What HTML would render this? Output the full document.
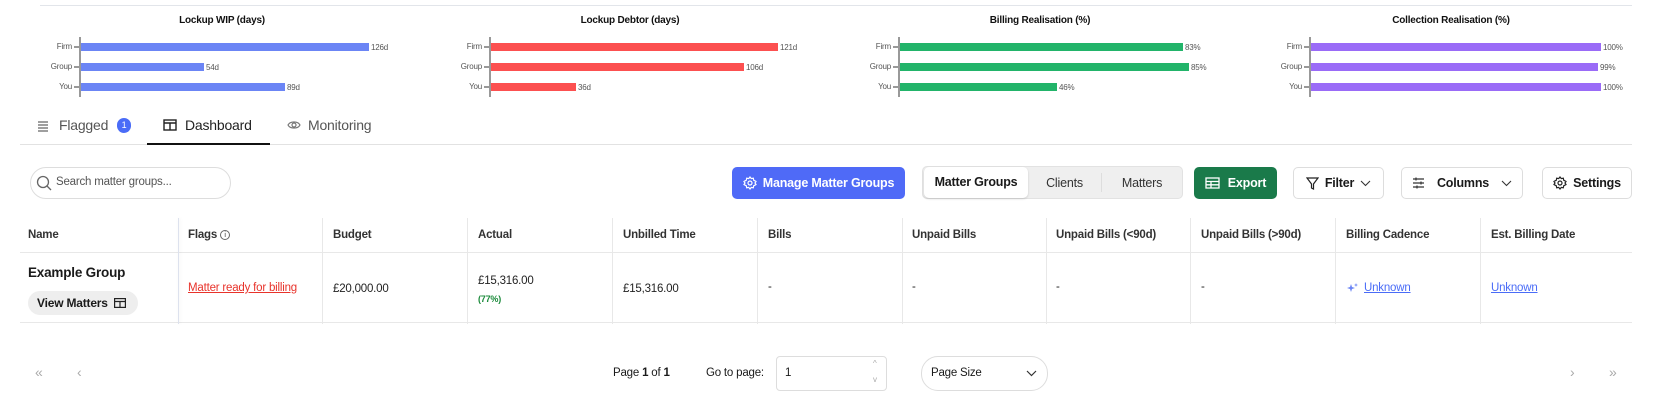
<!DOCTYPE html>
<html><head><meta charset="utf-8">
<style>
*{box-sizing:border-box;margin:0;padding:0}
body{width:1667px;height:407px;background:#fff;font-family:"Liberation Sans",Arial,sans-serif;color:#1a1a1a;position:relative;overflow:hidden;letter-spacing:-0.2px}
.a{position:absolute}
.topline{left:40px;top:5px;width:1592px;height:1px;background:#e2e5ea}
.ct{font-size:10px;font-weight:bold;color:#111;transform:translateX(-50%);white-space:nowrap;top:15px}
.axis{width:2px;background:#999;top:37px;height:60px}
.bar{height:8px}
.bl{font-size:8px;color:#555}
.cl{font-size:8px;color:#555;text-align:right;width:40px}
.tick{width:5px;height:2px;background:#999}
.tab{font-size:14px;color:#555;top:117px}
.btn{border:1px solid #ddd;border-radius:5px;background:#fff;height:32px;top:167px;display:flex;align-items:center;justify-content:center;font-size:12.5px;font-weight:bold;gap:8px;white-space:nowrap}
.th{font-size:11.5px;font-weight:bold;color:#333;top:229px}
.vl{width:1px;background:#e8e8e8;top:218px;height:106px}
.td{font-size:11.5px;color:#222}
</style></head><body>
<div class="a topline"></div>

<div class="a ct" style="left:222px">Lockup WIP (days)</div>
<div class="a axis" style="left:79px"></div>
<div class="a bar" style="left:81px;top:43px;width:288px;background:#6b85f5"></div>
<div class="a bar" style="left:81px;top:63px;width:123px;background:#6b85f5"></div>
<div class="a bar" style="left:81px;top:83px;width:204px;background:#6b85f5"></div>
<div class="a bl" style="left:371px;top:43px">126d</div>
<div class="a bl" style="left:206px;top:63px">54d</div>
<div class="a bl" style="left:287px;top:83px">89d</div>
<div class="a cl" style="left:32px;top:42px">Firm</div><div class="a tick" style="left:74px;top:46px"></div>
<div class="a cl" style="left:32px;top:62px">Group</div><div class="a tick" style="left:74px;top:66px"></div>
<div class="a cl" style="left:32px;top:82px">You</div><div class="a tick" style="left:74px;top:86px"></div>

<div class="a ct" style="left:630px">Lockup Debtor (days)</div>
<div class="a axis" style="left:489px"></div>
<div class="a bar" style="left:491px;top:43px;width:287px;background:#fc5050"></div>
<div class="a bar" style="left:491px;top:63px;width:253px;background:#fc5050"></div>
<div class="a bar" style="left:491px;top:83px;width:85px;background:#fc5050"></div>
<div class="a bl" style="left:780px;top:43px">121d</div>
<div class="a bl" style="left:746px;top:63px">106d</div>
<div class="a bl" style="left:578px;top:83px">36d</div>
<div class="a cl" style="left:442px;top:42px">Firm</div><div class="a tick" style="left:484px;top:46px"></div>
<div class="a cl" style="left:442px;top:62px">Group</div><div class="a tick" style="left:484px;top:66px"></div>
<div class="a cl" style="left:442px;top:82px">You</div><div class="a tick" style="left:484px;top:86px"></div>

<div class="a ct" style="left:1040px">Billing Realisation (%)</div>
<div class="a axis" style="left:898px"></div>
<div class="a bar" style="left:900px;top:43px;width:283px;background:#22b46a"></div>
<div class="a bar" style="left:900px;top:63px;width:289px;background:#22b46a"></div>
<div class="a bar" style="left:900px;top:83px;width:157px;background:#22b46a"></div>
<div class="a bl" style="left:1185px;top:43px">83%</div>
<div class="a bl" style="left:1191px;top:63px">85%</div>
<div class="a bl" style="left:1059px;top:83px">46%</div>
<div class="a cl" style="left:851px;top:42px">Firm</div><div class="a tick" style="left:893px;top:46px"></div>
<div class="a cl" style="left:851px;top:62px">Group</div><div class="a tick" style="left:893px;top:66px"></div>
<div class="a cl" style="left:851px;top:82px">You</div><div class="a tick" style="left:893px;top:86px"></div>

<div class="a ct" style="left:1451px">Collection Realisation (%)</div>
<div class="a axis" style="left:1309px"></div>
<div class="a bar" style="left:1311px;top:43px;width:290px;background:#9a6bf7"></div>
<div class="a bar" style="left:1311px;top:63px;width:287px;background:#9a6bf7"></div>
<div class="a bar" style="left:1311px;top:83px;width:290px;background:#9a6bf7"></div>
<div class="a bl" style="left:1603px;top:43px">100%</div>
<div class="a bl" style="left:1600px;top:63px">99%</div>
<div class="a bl" style="left:1603px;top:83px">100%</div>
<div class="a cl" style="left:1262px;top:42px">Firm</div><div class="a tick" style="left:1304px;top:46px"></div>
<div class="a cl" style="left:1262px;top:62px">Group</div><div class="a tick" style="left:1304px;top:66px"></div>
<div class="a cl" style="left:1262px;top:82px">You</div><div class="a tick" style="left:1304px;top:86px"></div>

<div class="a" style="left:20px;top:144px;width:1612px;height:1px;background:#e2e2e2"></div>
<div class="a" style="left:147px;top:143px;width:123px;height:2px;background:#111"></div>
<svg class="a" style="left:37px;top:120px" width="12" height="12" viewBox="0 0 12 12" fill="none" stroke="#666" stroke-width="1.2"><path d="M1 2h10M1 5h10M1 8h10M1 11h10"/></svg>
<div class="a tab" style="left:59px">Flagged</div>
<div class="a" style="left:117px;top:118px;width:14px;height:15px;border-radius:8px;background:#4a6cf7;color:#fff;font-size:9px;text-align:center;line-height:15px">1</div>
<svg class="a" style="left:163px;top:119px" width="14" height="12" viewBox="0 0 14 12" fill="none" stroke="#222" stroke-width="1.4"><rect x="1" y="1" width="12" height="10"/><path d="M1 4h12M7 4v7"/></svg>
<div class="a tab" style="left:185px;color:#222">Dashboard</div>
<svg class="a" style="left:287px;top:119px" width="14" height="12" viewBox="0 0 14 12" fill="none" stroke="#777" stroke-width="1.2"><path d="M1 6c2-4 10-4 12 0c-2 4-10 4-12 0z"/><circle cx="7" cy="6" r="2"/></svg>
<div class="a tab" style="left:308px">Monitoring</div>

<div class="a" style="left:30px;top:167px;width:201px;height:32px;border:1px solid #ddd;border-radius:16px"></div>
<svg class="a" style="left:36px;top:175px" width="16" height="16" viewBox="0 0 16 16" fill="none" stroke="#666" stroke-width="1.3"><circle cx="7" cy="7" r="5.5"/><path d="M11 11l4 4"/></svg>
<div class="a" style="left:56px;top:176px;font-size:11.5px;color:#555">Search matter groups...</div>

<div class="a btn" style="left:732px;width:173px;background:#4f6af7;border-color:#4f6af7;color:#fff;font-size:12.5px;gap:6px">
<svg width="14" height="14" viewBox="0 0 14 14" fill="none" stroke="#fff" stroke-width="1.2"><circle cx="7" cy="7" r="2"/><path d="M7 1l1.3 1.6 2-.4.4 2L13 5.5 12 7l1 1.5-2.3 1.3-.4 2-2-.4L7 13l-1.3-1.6-2 .4-.4-2L1 8.5 2 7 1 5.5l2.3-1.3.4-2 2 .4z"/></svg>Manage Matter Groups</div>

<div class="a" style="left:922px;top:166px;width:261px;height:33px;background:#efefef;border:1px solid #e2e2e2;border-radius:5px"></div>
<div class="a" style="left:924px;top:167px;width:104px;height:31px;background:#fff;border-radius:5px;box-shadow:0 1px 2px rgba(0,0,0,.15);font-size:12.5px;font-weight:bold;text-align:center;line-height:31px">Matter Groups</div>
<div class="a" style="left:1028px;top:176px;width:73px;text-align:center;font-size:12.5px;color:#333">Clients</div>
<div class="a" style="left:1101px;top:173px;width:1px;height:19px;background:#ddd"></div>
<div class="a" style="left:1102px;top:176px;width:80px;text-align:center;font-size:12.5px;color:#333">Matters</div>

<div class="a btn" style="left:1194px;width:83px;background:#1a7a4a;border-color:#1a7a4a;color:#fff">
<svg width="15" height="12" viewBox="0 0 15 12" fill="none" stroke="#fff" stroke-width="1.3"><rect x="1" y="1" width="13" height="10"/><path d="M1 4.5h13M1 7.8h13M6 4.5v6.5"/></svg>Export</div>
<div class="a btn" style="left:1293px;width:91px;gap:6px">
<svg width="13" height="13" viewBox="0 0 13 13" fill="none" stroke="#222" stroke-width="1.2"><path d="M1 1h11L7.5 7v5L5.5 11V7z"/></svg>Filter<svg width="11" height="7" viewBox="0 0 11 7" fill="none" stroke="#333" stroke-width="1.1"><path d="M1 1l4.5 4.5L10 1"/></svg></div>
<div class="a btn" style="left:1401px;width:122px;gap:12px">
<svg width="13" height="12" viewBox="0 0 13 12" fill="none" stroke="#333" stroke-width="1.2"><path d="M1 2h11M1 6h11M1 10h11M4 0.5v3M9 4.5v3M5 8.5v3"/></svg>Columns<svg width="11" height="7" viewBox="0 0 11 7" fill="none" stroke="#333" stroke-width="1.1"><path d="M1 1l4.5 4.5L10 1"/></svg></div>
<div class="a btn" style="left:1542px;width:90px;gap:6px">
<svg width="14" height="14" viewBox="0 0 14 14" fill="none" stroke="#222" stroke-width="1.2"><circle cx="7" cy="7" r="2"/><path d="M7 1l1.3 1.6 2-.4.4 2L13 5.5 12 7l1 1.5-2.3 1.3-.4 2-2-.4L7 13l-1.3-1.6-2 .4-.4-2L1 8.5 2 7 1 5.5l2.3-1.3.4-2 2 .4z"/></svg>Settings</div>

<div class="a" style="left:20px;top:252px;width:1612px;height:1px;background:#e8e8e8"></div>
<div class="a" style="left:20px;top:322px;width:1612px;height:1px;background:#e8e8e8"></div>
<div class="a" style="left:178px;top:218px;width:1px;height:106px;background:#dde2ee;box-shadow:1px 0 3px rgba(0,0,0,.08)"></div>
<div class="a vl" style="left:322px"></div><div class="a vl" style="left:467px"></div><div class="a vl" style="left:612px"></div><div class="a vl" style="left:757px"></div><div class="a vl" style="left:902px"></div><div class="a vl" style="left:1046px"></div><div class="a vl" style="left:1190px"></div><div class="a vl" style="left:1335px"></div><div class="a vl" style="left:1480px"></div>
<div class="a th" style="left:28px">Name</div>
<div class="a th" style="left:188px">Flags <span style="display:inline-block;width:10px;height:10px;border:1px solid #666;border-radius:50%;font-size:7px;text-align:center;line-height:9px;font-weight:normal;vertical-align:1px">i</span></div>
<div class="a th" style="left:333px">Budget</div>
<div class="a th" style="left:478px">Actual</div>
<div class="a th" style="left:623px">Unbilled Time</div>
<div class="a th" style="left:768px">Bills</div>
<div class="a th" style="left:912px">Unpaid Bills</div>
<div class="a th" style="left:1056px">Unpaid Bills (&lt;90d)</div>
<div class="a th" style="left:1201px">Unpaid Bills (&gt;90d)</div>
<div class="a th" style="left:1346px">Billing Cadence</div>
<div class="a th" style="left:1491px">Est. Billing Date</div>

<div class="a" style="left:28px;top:265px;font-size:13.5px;font-weight:bold">Example Group</div>
<div class="a" style="left:28px;top:291px;width:110px;height:24px;border-radius:12px;background:#eee;font-size:12px;font-weight:bold;line-height:24px;padding-left:9px">View Matters
<svg style="vertical-align:-1px;margin-left:3px" width="12" height="10" viewBox="0 0 12 10" fill="none" stroke="#222" stroke-width="1.2"><rect x="0.6" y="0.6" width="10.8" height="8.8"/><path d="M0.6 3.5h10.8M6 3.5v6"/></svg></div>
<div class="a td" style="left:188px;top:282px;color:#e8332b;text-decoration:underline">Matter ready for billing</div>
<div class="a td" style="left:333px;top:283px">£20,000.00</div>
<div class="a td" style="left:478px;top:275px">£15,316.00</div>
<div class="a" style="left:478px;top:294px;font-size:9px;font-weight:bold;color:#1a8a3a">(77%)</div>
<div class="a td" style="left:623px;top:283px">£15,316.00</div>
<div class="a td" style="left:768px;top:281px">-</div>
<div class="a td" style="left:912px;top:281px">-</div>
<div class="a td" style="left:1056px;top:281px">-</div>
<div class="a td" style="left:1201px;top:281px">-</div>
<svg class="a" style="left:1346px;top:283px" width="12" height="12" viewBox="0 0 12 12" fill="#6b85f5"><path d="M5 1l1 3 3 1-3 1-1 3-1-3-3-1 3-1z"/><path d="M10 0l.5 1.5L12 2l-1.5.5L10 4l-.5-1.5L8 2l1.5-.5z"/></svg>
<div class="a td" style="left:1364px;top:282px;color:#4a6cf7;text-decoration:underline">Unknown</div>
<div class="a td" style="left:1491px;top:282px;color:#4a6cf7;text-decoration:underline">Unknown</div>

<div class="a" style="left:35px;top:364px;font-size:14px;color:#aaa">«</div>
<div class="a" style="left:77px;top:364px;font-size:14px;color:#aaa">‹</div>
<div class="a" style="left:613px;top:367px;font-size:11.5px">Page <b>1</b> of <b>1</b></div>
<div class="a" style="left:706px;top:367px;font-size:11.5px">Go to page:</div>
<div class="a" style="left:776px;top:356px;width:111px;height:35px;border:1px solid #ddd;border-radius:4px;font-size:11.5px;padding:10px 8px">1</div>
<div class="a" style="left:873px;top:359px;font-size:8px;color:#aaa">^</div>
<div class="a" style="left:873px;top:375px;font-size:8px;color:#aaa">v</div>
<div class="a" style="left:921px;top:356px;width:127px;height:35px;border:1px solid #ddd;border-radius:17px;font-size:11.5px;padding:10px 9px">Page Size</div>
<svg class="a" style="left:1026px;top:370px" width="11" height="7" viewBox="0 0 11 7" fill="none" stroke="#333" stroke-width="1.2"><path d="M1 1l4.5 4.5L10 1"/></svg>
<div class="a" style="left:1570px;top:364px;font-size:14px;color:#aaa">›</div>
<div class="a" style="left:1609px;top:364px;font-size:14px;color:#aaa">»</div>
</body></html>
